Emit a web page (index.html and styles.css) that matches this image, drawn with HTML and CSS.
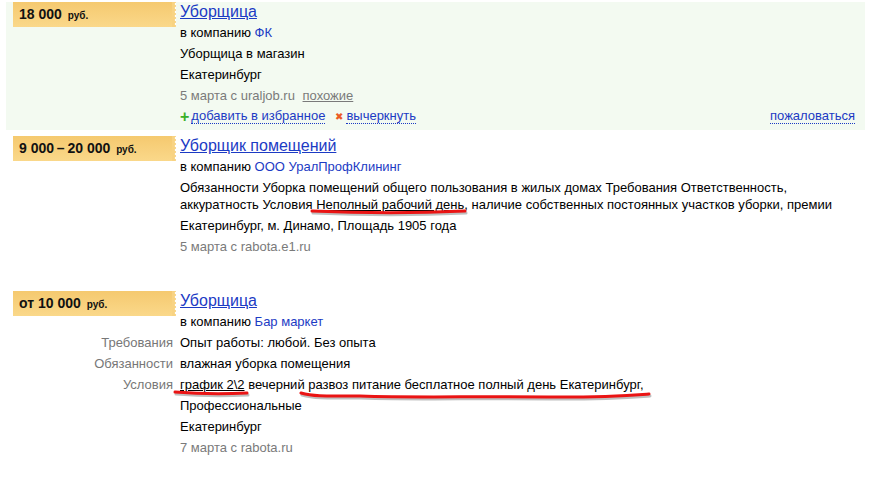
FILE: index.html
```html
<!DOCTYPE html>
<html>
<head>
    <meta charset="UTF-8">
    <title>Вакансии</title>
    <link rel="stylesheet" href="styles.css">
</head>
<body>
<div class="page">
    <!-- вакансия 1 -->
    <div class="vacancy hl">
        <div class="side">
            <div class="tag">18 000 <span class="cur">руб.</span></div>
        </div>
        <div class="info">
            <div class="title"><a href="#">Уборщица</a></div>
            <div class="row">в компанию <a class="comp" href="#">ФК</a></div>
            <div class="row">Уборщица в магазин</div>
            <div class="row">Екатеринбург</div>
            <div class="row date">5 марта с uraljob.ru <a class="similar" href="#">похожие</a></div>
            <div class="row actions">
                <span class="plus">+</span><a class="dot" href="#">добавить в избранное</a>
                <span class="cross">&#10006;</span><a class="dot" href="#">вычеркнуть</a>
                <a class="dot complain" href="#">пожаловаться</a>
            </div>
        </div>
    </div>

    <!-- вакансия 2 -->
    <div class="vacancy">
        <div class="side">
            <div class="tag">9 000&thinsp;&ndash;&thinsp;20 000 <span class="cur">руб.</span></div>
        </div>
        <div class="info">
            <div class="title"><a href="#">Уборщик помещений</a></div>
            <div class="row">в компанию <a class="comp" href="#">ООО УралПрофКлининг</a></div>
            <div class="desc">Обязанности Уборка помещений общего пользования в жилых домах Требования Ответственность, аккуратность Условия <span class="mark">Неполный рабочий день</span>, наличие собственных постоянных участков уборки, премии</div>
            <div class="row">Екатеринбург, м. Динамо, Площадь 1905 года</div>
            <div class="row date">5 марта с rabota.e1.ru</div>
        </div>
    </div>

    <!-- вакансия 3 -->
    <div class="vacancy last">
        <div class="side">
            <div class="tag">от 10 000 <span class="cur">руб.</span></div>
        </div>
        <div class="info">
            <div class="title"><a href="#">Уборщица</a></div>
            <div class="row">в компанию <a class="comp" href="#">Бар маркет</a></div>
        </div>
    </div>
    <div class="fields">
        <div class="label">Требования</div><div class="row">Опыт работы: любой. Без опыта</div>
        <div class="label">Обязанности</div><div class="row">влажная уборка помещения</div>
        <div class="label">Условия</div><div class="row"><span class="mark">график 2\2</span> вечерний развоз питание бесплатное полный день Екатеринбург,</div>
        <div class="label"></div><div class="row">Профессиональные</div>
        <div class="label"></div><div class="row">Екатеринбург</div>
        <div class="label"></div><div class="row date">7 марта с rabota.ru</div>
    </div>
</div>

<!-- красные пометки поверх текста -->
<svg class="marks" width="878" height="478" viewBox="0 0 878 478">
    <g fill="none" stroke-linecap="round">
        <g stroke="rgba(0,0,0,.25)" stroke-width="3" transform="translate(1,2)">
            <path d="M312 211 C360 213 420 213 465 211"/>
            <path d="M175 392 C200 394 225 394 247 393"/>
            <path d="M301 393 C315 397 330 396 360 396 C420 398 470 396 560 397 C610 397 635 395 649 394"/>
        </g>
        <g stroke="#ea1414" stroke-width="3">
            <path d="M312 211 C360 213 420 213 465 211"/>
            <path d="M175 392 C200 394 225 394 247 393"/>
            <path d="M301 393 C315 397 330 396 360 396 C420 398 470 396 560 397 C610 397 635 395 649 394"/>
        </g>
    </g>
</svg>
</body>
</html>
```

FILE: styles.css
```css
* {
    margin: 0;
    padding: 0;
}
body {
    position: relative;
    background: #fff;
    font-family: "Liberation Sans", Arial, sans-serif;
    font-size: 13px;
    color: #000;
}
a {
    color: #1c3bc4;
}
.page {
    padding: 2px 13px 0 6px;
}
.vacancy {
    display: flex;
    padding-bottom: 3px;
    margin-bottom: 6px;
}
.vacancy.hl {
    background-color: #f3faf1;
}
.vacancy.last {
    margin-top: 31px;
    margin-bottom: 0;
    padding-bottom: 0;
}
.side {
    width: 174px;
    flex-shrink: 0;
}
.tag {
    position: relative;
    margin-left: 7px;
    width: 153px;
    height: 25px;
    padding-left: 6px;
    line-height: 25px;
    font-size: 14px;
    font-weight: bold;
    color: #111;
    background: linear-gradient(#f5c96f, #fad88a);
}
.tag:after {
    content: "";
    position: absolute;
    top: 0;
    right: -4px;
    width: 4px;
    height: 25px;
    background: radial-gradient(circle at 4px 2px, #fff 1.4px, #f8d383 1.6px) 0 0 / 4px 4px repeat-y;
}
.cur {
    font-size: 10px;
    margin-left: 2px;
}
.info {
    flex: 1;
}
.title {
    height: 20px;
    line-height: 20px;
    font-size: 16px;
}
.row {
    height: 21px;
    line-height: 21px;
    white-space: nowrap;
}
.comp {
    text-decoration: none;
}
.desc {
    padding: 2px 0;
    line-height: 17px;
    padding-right: 20px;
}
.date {
    color: #7a7a7a;
}
.similar {
    color: #7a7a7a;
    margin-left: 4px;
}
.actions {
    display: flex;
    align-items: center;
}
.dot {
    text-decoration: none;
    line-height: 14px;
    border-bottom: 1px dotted #1c3bc4;
}
.plus {
    color: #3ab02a;
    font-weight: bold;
    font-size: 16px;
    margin-right: 2px;
}
.cross {
    color: #ec5b24;
    font-size: 10px;
    margin: 0 3px 0 10px;
}
.complain {
    margin-left: auto;
    margin-right: 10px;
}
.mark {
    text-decoration: underline;
}
.fields {
    display: grid;
    grid-template-columns: 167px 1fr;
    column-gap: 7px;
}
.label {
    height: 21px;
    line-height: 21px;
    text-align: right;
    color: #777;
}
.marks {
    position: absolute;
    left: 0;
    top: 0;
    pointer-events: none;
}
```
